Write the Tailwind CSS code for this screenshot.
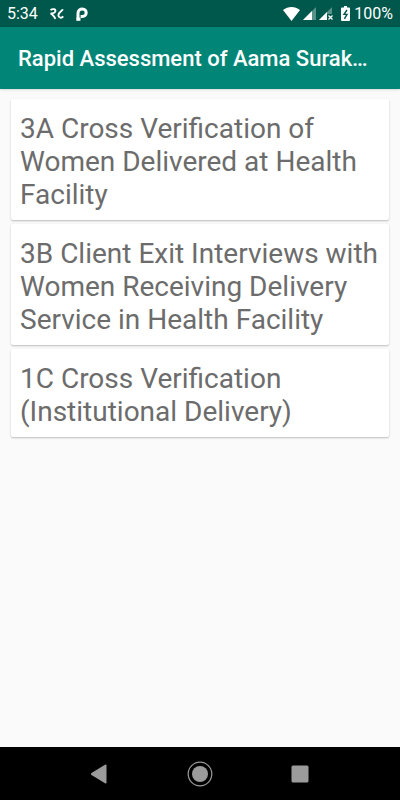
<!DOCTYPE html>
<html lang="en">
<head>
    <meta charset="UTF-8">
    <meta name="viewport" content="width=device-width, initial-scale=1.0">
    <title>Rapid Assessment of Aama Suraksha</title>
    <script src="https://cdn.jsdelivr.net/npm/@tailwindcss/browser@4"></script>
</head>
<body class="min-h-screen flex flex-col bg-[#fafafa] font-[Roboto,sans-serif]">
    <!-- Status bar -->
    <div class="h-[27px] px-[7px] flex items-center justify-between bg-[#00574b] text-white text-base leading-5">
        <div class="flex items-center">
            <span class="w-[42px]">5:34</span>
            <svg class="w-4 h-4" viewBox="0 0 16 16" fill="none" stroke="currentColor" stroke-width="1.9">
                <path d="M1.5 4C3.5 2.6 6.8 2.8 6.4 5.2C6.1 6.9 4.2 7.5 1.5 7.5C3.8 7.8 4.5 10.3 6.5 12.8" />
                <path d="M13.8 3.2C13 5.6 9.4 6 9.4 9.3C9.4 12 12.6 12.6 14.2 10.4" />
            </svg>
            <svg class="w-3 h-[14px] ml-[11px]" viewBox="0 0 12 14" fill="none" stroke="currentColor" stroke-width="3">
                <path d="M2 13.5V6.2C2 3.5 4 2 6.4 2S10.2 3.6 10.2 5.7S8.5 9.4 6.4 9.4H4.6" />
                <path d="M0.5 12.2H4.5" />
            </svg>
        </div>
        <div class="flex items-center">
            <svg class="w-[17px] h-[14px]" viewBox="0 0 17 14" fill="currentColor">
                <path d="M0 3C5 -1 12 -1 17 3L8.5 14Z" />
            </svg>
            <svg class="w-[13px] h-[13px] ml-[3px]" viewBox="0 0 13 13" fill="currentColor">
                <path d="M13 0V13H0Z" opacity=".35" />
                <path d="M9 4V13H0Z" />
            </svg>
            <svg class="w-[14px] h-[13px] ml-[3px]" viewBox="0 0 14 13" fill="currentColor">
                <path d="M13 0V7H8V13H0Z" opacity=".35" />
                <path d="M8 5V13H0Z" />
                <path d="M9.5 8.5L13.5 12.5M13.5 8.5L9.5 12.5" stroke="currentColor" stroke-width="1.3" />
            </svg>
            <svg class="w-[9px] h-[15px] ml-2 mr-1" viewBox="0 0 9 15">
                <path d="M3 0H6V1.5H8Q9 1.5 9 2.5V14Q9 15 8 15H1Q0 15 0 14V2.5Q0 1.5 1 1.5H3Z" fill="white" />
                <path d="M6 4L3 8.4H6L3.4 12.8" fill="none" stroke="#00574b" stroke-width="1.4" />
            </svg>
            <span>100%</span>
        </div>
    </div>

    <!-- App bar -->
    <header class="h-[62px] pt-[2px] px-[18px] flex items-center bg-[#008577] text-white shadow-sm">
        <h1 class="text-[22px] leading-7 font-medium truncate">Rapid Assessment of Aama Surak…</h1>
    </header>

    <!-- Forms -->
    <main class="flex-1 py-[10px] px-[11px] flex flex-col gap-1 text-[28px] leading-[33px] text-[#6c6c6c]">
        <div class="pt-[13px] pb-[9px] pl-[9px] pr-1 bg-white rounded-xs shadow-[0_1px_2px_rgba(0,0,0,0.25)]">3A Cross Verification of Women Delivered at Health Facility</div>
        <div class="pt-[13px] pb-[9px] pl-[9px] pr-1 bg-white rounded-xs shadow-[0_1px_2px_rgba(0,0,0,0.25)]">3B Client Exit Interviews with Women Receiving Delivery Service in Health Facility</div>
        <div class="pt-[13px] pb-[9px] pl-[9px] pr-1 bg-white rounded-xs shadow-[0_1px_2px_rgba(0,0,0,0.25)]">1C Cross Verification (Institutional Delivery)</div>
    </main>

    <!-- Navigation bar -->
    <nav class="h-[53px] px-[50px] grid grid-cols-3 bg-black text-[#9b9b9b]">
        <button class="flex items-center justify-center" aria-label="Back">
            <svg class="w-[26px] h-[26px]" viewBox="0 0 26 26" fill="currentColor">
                <path d="M19.5 4.5V21.5Q19.5 23 18 22.2L4.5 14Q3 13 4.5 12L18 3.8Q19.5 3 19.5 4.5Z" />
            </svg>
        </button>
        <button class="flex items-center justify-center" aria-label="Home">
            <svg class="w-[26px] h-[26px]" viewBox="0 0 26 26" fill="currentColor">
                <circle cx="13" cy="13" r="11.8" fill="none" stroke="currentColor" stroke-width="1.2" />
                <circle cx="13" cy="13" r="8" />
            </svg>
        </button>
        <button class="flex items-center justify-center" aria-label="Recent apps">
            <svg class="w-[26px] h-[26px]" viewBox="0 0 26 26" fill="currentColor">
                <rect x="4.5" y="4.5" width="17" height="17" rx="1.5" />
            </svg>
        </button>
    </nav>
</body>
</html>
